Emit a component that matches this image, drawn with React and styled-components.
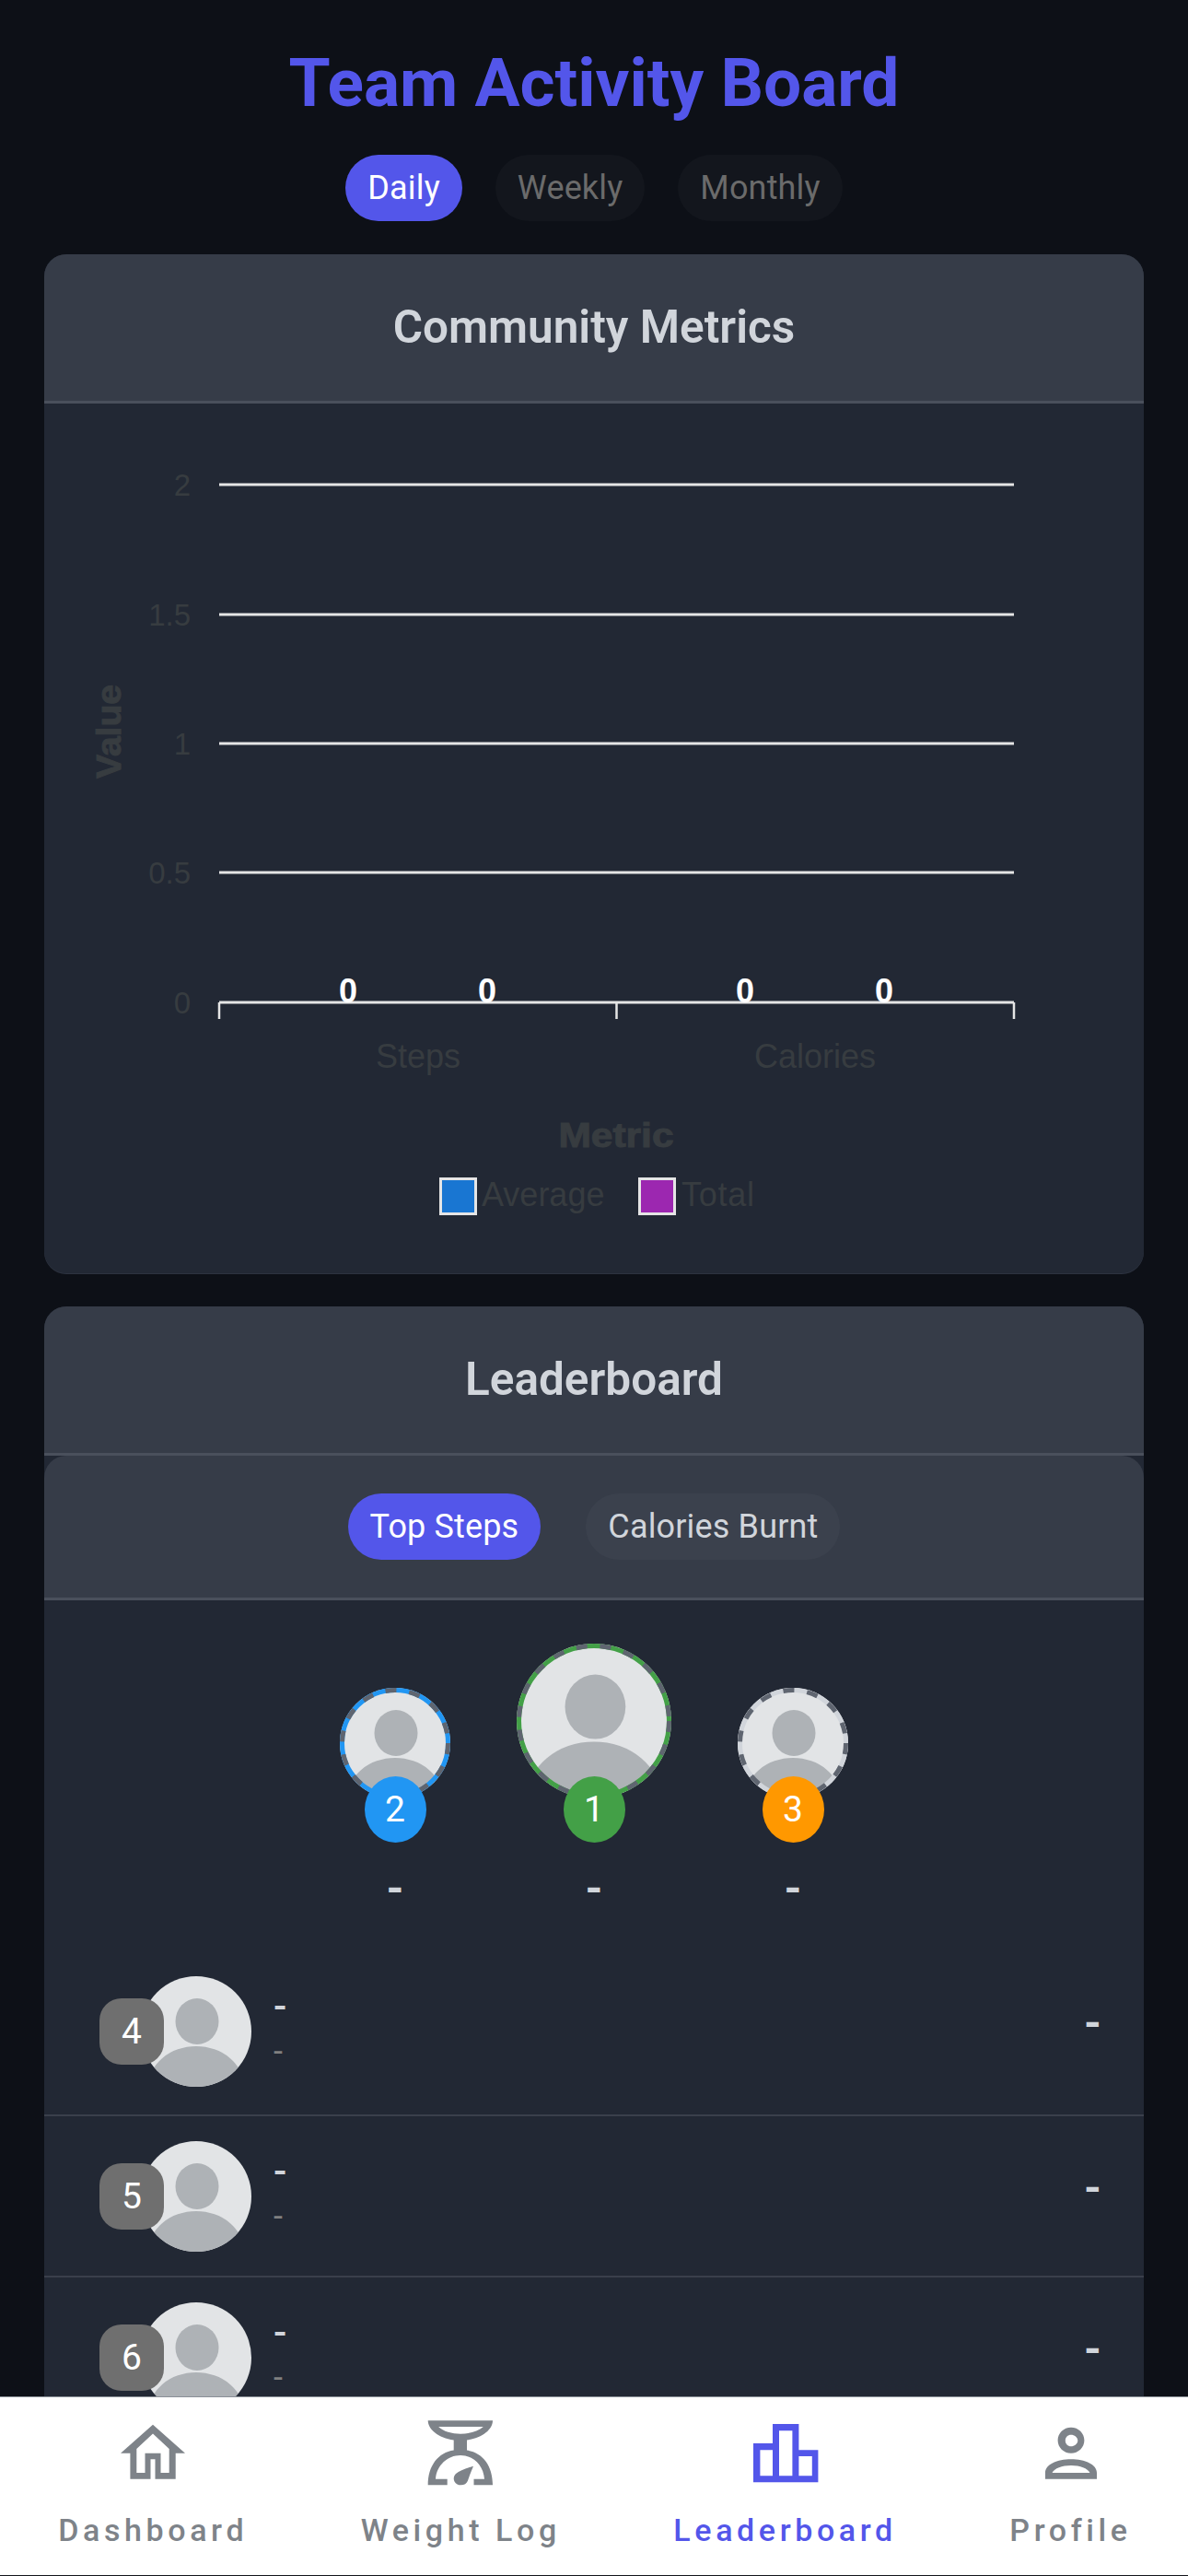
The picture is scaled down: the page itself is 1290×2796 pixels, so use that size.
import styled, { createGlobalStyle } from 'styled-components';

const GlobalStyle = createGlobalStyle`
  html, body {
    margin: 0;
    padding: 0;
    background: #0d1017;
    overflow: hidden;
  }
  * {
    box-sizing: border-box;
  }
`;

let clipCount = 0;

const Avatar = ({ size, ring }) => {
  const clipId = `avatar-clip-${clipCount++}`;
  const scale = 120 / size;
  const ringWidth = 5 * scale;
  return (
    <AvatarSvg viewBox="0 0 120 120" $size={size}>
      <defs>
        <clipPath id={clipId}>
          <circle cx="60" cy="60" r="60" />
        </clipPath>
      </defs>
      <g clipPath={`url(#${clipId})`}>
        <rect width="120" height="120" fill="#e2e4e6" />
        <ellipse cx="61" cy="49" rx="23.5" ry="25" fill="#aeb2b6" />
        <ellipse cx="60" cy="120" rx="52" ry="44" fill="#aeb2b6" />
      </g>
      {ring && (
        <>
          <circle cx="60" cy="60" r={60 - ringWidth / 2} fill="none" stroke={ring} strokeWidth={ringWidth} />
          <circle
            cx="60"
            cy="60"
            r={60 - ringWidth / 2}
            fill="none"
            stroke="#5f6570"
            strokeWidth={ringWidth}
            strokeDasharray={`${12 * scale} ${14 * scale}`}
          />
        </>
      )}
    </AvatarSvg>
  );
};

const HomeIcon = () => (
  <svg width="72" height="72" viewBox="0 0 72 72">
    <path
      fill="currentColor"
      fillRule="evenodd"
      d="M36 5.7 71 36.7H60.7V64.7H38.5V43.3H33.5V64.7H11.4V36.7H1ZM36 15.5 53.7 32V58H44.5V36.7H27.5V58H18.3V32Z"
    />
  </svg>
);

const WeightIcon = () => (
  <svg width="72" height="72" viewBox="0 0 72 72">
    <path
      fill="currentColor"
      fillRule="evenodd"
      d="M.7 1.3H71C71 11 60 20 43 22.5V33.5C60 36 71 50 71 71.3H50.5V64.7H62C61 50 50 39 36 39S10 50 9 64.7H21.7V71.3H.7C.7 50 12 36 28.7 33.5V22.5C12 20 .7 11 .7 1.3ZM12.2 8C17 13 27 15.7 36 15.7S55 13 60.8 8Z"
    />
    <path
      fill="currentColor"
      d="M50 50.7C47 58 45 63 44 66.5 42.5 71 37 72.5 32.5 70.5 28 68 27.5 62.5 31 59 35 55.5 42 53 50 50.7Z"
    />
  </svg>
);

const BoardIcon = () => (
  <svg width="72" height="72" viewBox="0 0 72 72">
    <path
      fill="currentColor"
      fillRule="evenodd"
      d="M1 26H22V5H50.4V33.3H71.4V68.3H1ZM8.4 33.3V61.3H22V33.3ZM29 12.3V61.3H43.4V12.3ZM50.4 40V61.3H64.8V40Z"
    />
  </svg>
);

const ProfileIcon = () => (
  <svg width="72" height="72" viewBox="0 0 72 72">
    <path
      fill="currentColor"
      fillRule="evenodd"
      d="M36 8.7C44 8.7 50.4 15 50.4 22.7S44 36.7 36 36.7 21.6 30.4 21.6 22.7 28 8.7 36 8.7ZM36 16.7C32.5 16.7 29.8 19.4 29.8 23S32.5 29.3 36 29.3 43.3 26.6 43.3 23 39.5 16.7 36 16.7ZM8 64.7V58C8 49 21 43.3 36 43.3S64 49 64 58V64.7ZM15.5 58H56.5C54 53 46 50 36 50S18 53 15.5 58Z"
    />
  </svg>
);

const gridRows = [
  { label: '2', y: 526 },
  { label: '1.5', y: 667 },
  { label: '1', y: 807 },
  { label: '0.5', y: 947 },
  { label: '0', y: 1088 },
];

const axisColor = '#373c40';

const MetricsChart = () => (
  <ChartSvg viewBox="48 438 1194 944">
    {gridRows.map((row) => (
      <g key={row.label}>
        <text x="207" y={row.y + 12} textAnchor="end" fontSize="33" fill={axisColor}>
          {row.label}
        </text>
        <line x1="238" x2="1101" y1={row.y} y2={row.y} stroke="#e5e5e5" strokeWidth="3" />
      </g>
    ))}
    {[238, 669.5, 1101].map((x) => (
      <line key={x} x1={x} x2={x} y1="1088" y2="1106" stroke="#e5e5e5" strokeWidth="2.5" />
    ))}
    {[378, 529, 809, 960].map((x) => (
      <text key={x} x={x} y="1088" textAnchor="middle" fontSize="36" fontWeight="700" fill="#fff">
        0
      </text>
    ))}
    <text x="454" y="1159" textAnchor="middle" fontSize="36" fill={axisColor}>Steps</text>
    <text x="885" y="1159" textAnchor="middle" fontSize="36" fill={axisColor}>Calories</text>
    <text
      x="669"
      y="1245"
      textAnchor="middle"
      fontSize="36"
      fontWeight="700"
      fill={axisColor}
      stroke={axisColor}
      strokeWidth="1"
      textLength="125"
      lengthAdjust="spacingAndGlyphs"
    >
      Metric
    </text>
    <text
      x="0"
      y="0"
      transform="translate(131 794) rotate(-90)"
      textAnchor="middle"
      fontSize="36"
      fontWeight="700"
      fill={axisColor}
      stroke={axisColor}
      strokeWidth="1"
      textLength="102"
      lengthAdjust="spacingAndGlyphs"
    >
      Value
    </text>
    <rect x="478.5" y="1279.5" width="38" height="38" fill="#1976d2" stroke="#e5e5e5" strokeWidth="3" />
    <text x="523" y="1309" fontSize="36" fill={axisColor}>Average</text>
    <rect x="694.5" y="1279.5" width="38" height="38" fill="#9c27b0" stroke="#e5e5e5" strokeWidth="3" />
    <text x="740" y="1309" fontSize="36" fill={axisColor} textLength="79" lengthAdjust="spacing">Total</text>
  </ChartSvg>
);

const podium = [
  { rank: 2, size: 120, color: '#2196f3' },
  { rank: 1, size: 168, color: '#43a047' },
  { rank: 3, size: 120, color: '#d1d5db', badge: '#ff9800' },
];

const navItems = [
  { label: 'Dashboard', Icon: HomeIcon },
  { label: 'Weight Log', Icon: WeightIcon },
  { label: 'Leaderboard', Icon: BoardIcon, active: true },
  { label: 'Profile', Icon: ProfileIcon },
];

export default function App() {
  return (
    <Screen>
      <GlobalStyle />
      <Scroll>
        <Title>Team Activity Board</Title>
        <RangeTabs $gap={36}>
          <Pill $active>Daily</Pill>
          <Pill>Weekly</Pill>
          <Pill>Monthly</Pill>
        </RangeTabs>
        <Card>
          <CardHeader>Community Metrics</CardHeader>
          <MetricsChart />
        </Card>
        <Card>
          <CardHeader>Leaderboard</CardHeader>
          <TabBar>
            <PillRow $gap={49}>
              <Pill $active>Top Steps</Pill>
              <Pill $light>Calories Burnt</Pill>
            </PillRow>
          </TabBar>
          <Podium>
            {podium.map((item) => (
              <PodiumColumn key={item.rank}>
                <Avatar size={item.size} ring={item.color} />
                <PodiumBadge $color={item.badge || item.color}>{item.rank}</PodiumBadge>
                <PodiumValue>-</PodiumValue>
              </PodiumColumn>
            ))}
          </Podium>
          {[4, 5, 6].map((rank) => (
            <Row key={rank}>
              <RankBadge>{rank}</RankBadge>
              <Avatar size={120} />
              <RowText>
                <RowName>-</RowName>
                <RowSub>-</RowSub>
              </RowText>
              <RowValue>-</RowValue>
            </Row>
          ))}
        </Card>
      </Scroll>
      <Nav>
        {navItems.map(({ label, Icon, active }) => (
          <NavItem key={label} $active={active}>
            <Icon />
            <NavLabel>{label}</NavLabel>
          </NavItem>
        ))}
      </Nav>
    </Screen>
  );
}

const Screen = styled.div`
  display: flex;
  flex-direction: column;
  height: 100vh;
  font-family: Roboto, 'Liberation Sans', sans-serif;
`;

const Scroll = styled.main`
  flex: 1;
  min-height: 0;
  overflow: hidden;
  padding: 48px 48px 0;
`;

const Title = styled.h1`
  margin: 0;
  color: #5356ea;
  font-size: 73px;
  font-weight: 700;
  line-height: 84px;
  text-align: center;
`;

const PillRow = styled.div`
  display: flex;
  justify-content: center;
  gap: ${(p) => p.$gap}px;
`;

const RangeTabs = styled(PillRow)`
  margin-top: 36px;
`;

const Pill = styled.div`
  display: flex;
  align-items: center;
  height: 72px;
  padding: 0 24px;
  border-radius: 36px;
  font-size: 36px;
  letter-spacing: 0.15px;
  color: ${(p) => (p.$active ? '#fff' : p.$light ? '#d1d5db' : '#6b6b6b')};
  background: ${(p) => (p.$active ? '#5356ea' : p.$light ? '#3b414d' : '#13161d')};
`;

const Card = styled.section`
  margin-top: 36px;
  border-radius: 24px;
  overflow: hidden;
  background: #222834;
  box-shadow: 0 1px 0 #2d3340;
`;

const CardHeader = styled.h2`
  display: flex;
  align-items: center;
  justify-content: center;
  height: 162px;
  margin: 0;
  padding-bottom: 1px;
  background: #363c48;
  border-bottom: 3px solid #4a505c;
  color: #d1d5db;
  font-size: 49.5px;
  font-weight: 600;
`;

const ChartSvg = styled.svg`
  display: block;
  width: 1194px;
  height: 944px;
  font-family: 'Liberation Sans', Arial, sans-serif;
`;

const TabBar = styled.div`
  padding: 41px 0;
  background: #363c48;
  border-radius: 24px 24px 0 0;
  border-bottom: 3px solid #4a505c;
`;

const Podium = styled.div`
  display: flex;
  justify-content: center;
  align-items: flex-end;
  gap: 72px;
  padding: 47px 0 40px;
`;

const PodiumColumn = styled.div`
  display: flex;
  flex-direction: column;
  align-items: center;
`;

const AvatarSvg = styled.svg`
  display: block;
  flex: none;
  width: ${(p) => p.$size}px;
  height: ${(p) => p.$size}px;
`;

const PodiumBadge = styled.div`
  position: relative;
  display: flex;
  align-items: center;
  justify-content: center;
  width: 67px;
  height: 72px;
  margin-top: -24px;
  border-radius: 50%;
  background: ${(p) => p.$color};
  color: #fff;
  font-size: 39px;
`;

const PodiumValue = styled.div`
  margin-top: 22px;
  color: #d1d5db;
  font-size: 48px;
  font-weight: 700;
  line-height: 56px;
`;

const Row = styled.div`
  display: flex;
  align-items: center;
  padding: 27px 46px 26px 60px;
  border-bottom: 2px solid #3a3f4b;
  &:nth-child(4) {
    padding-bottom: 30px;
  }
`;

const RankBadge = styled.div`
  position: relative;
  z-index: 1;
  display: flex;
  align-items: center;
  justify-content: center;
  flex: none;
  width: 70px;
  height: 72px;
  margin-right: -25px;
  border-radius: 24px;
  background: #6f6f6f;
  color: #fff;
  font-size: 39px;
`;

const RowText = styled.div`
  flex: 1;
  margin: 0 0 6px 24px;
`;

const RowName = styled.div`
  color: #d1d5db;
  font-size: 42px;
  font-weight: 500;
  line-height: 50px;
`;

const RowSub = styled.div`
  color: #808080;
  font-size: 36px;
  line-height: 48px;
`;

const RowValue = styled.div`
  margin-bottom: 20px;
  color: #d1d5db;
  font-size: 48px;
  font-weight: 700;
`;

const Nav = styled.nav`
  display: flex;
  flex: none;
  justify-content: space-around;
  height: 195px;
  padding: 24px 0 0 2px;
  background: #fff;
  border-top: 1px solid #8a8f96;
  border-bottom: 1px solid #14161c;
`;

const NavItem = styled.div`
  display: flex;
  flex-direction: column;
  align-items: center;
  color: ${(p) => (p.$active ? '#5356ea' : '#7e8389')};
`;

const NavLabel = styled.span`
  margin-top: 28px;
  font-size: 34px;
  font-weight: 500;
  letter-spacing: 4.6px;
`;
